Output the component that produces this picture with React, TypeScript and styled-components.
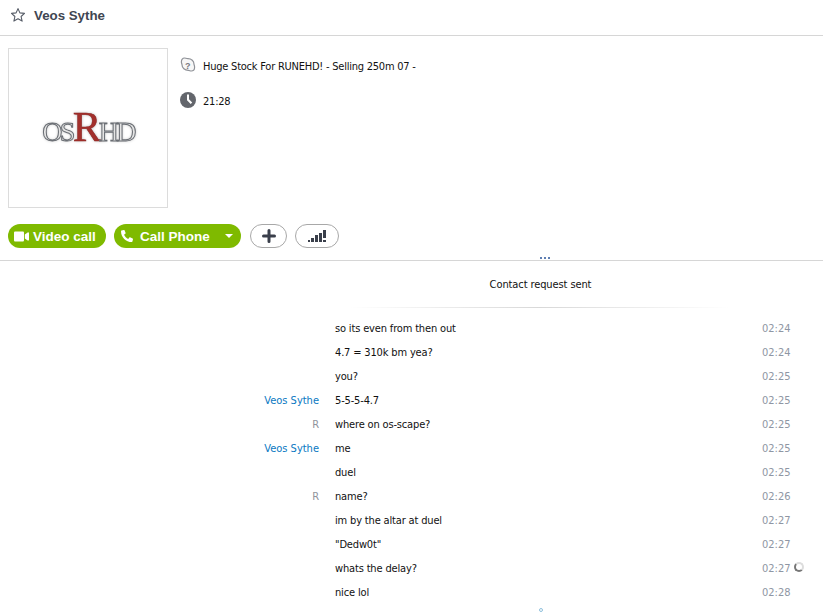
import styled, { createGlobalStyle } from "styled-components";
import { FaPhone, FaVideo } from "react-icons/fa";

const GlobalStyle = createGlobalStyle`
  html, body {
    margin: 0;
    padding: 0;
    background: #fff;
    overflow: hidden;
  }
  body {
    font-family: "DejaVu Sans Condensed", "DejaVu Sans", sans-serif;
    font-size: 11px;
    color: #111;
  }
`;

interface Message {
  sender?: string;
  own?: boolean;
  text: string;
  time: string;
  pending?: boolean;
}

const messages: Message[] = [
  { sender: "", text: "so its even from then out", time: "02:24" },
  { sender: "", text: "4.7 = 310k bm yea?", time: "02:24" },
  { sender: "", text: "you?", time: "02:25" },
  { sender: "Veos Sythe", text: "5-5-5-4.7", time: "02:25" },
  { sender: "R", own: true, text: "where on os-scape?", time: "02:25" },
  { sender: "Veos Sythe", text: "me", time: "02:25" },
  { sender: "", text: "duel", time: "02:25" },
  { sender: "R", own: true, text: "name?", time: "02:26" },
  { sender: "", text: "im by the altar at duel", time: "02:27" },
  { sender: "", text: '"Dedw0t"', time: "02:27" },
  { sender: "", text: "whats the delay?", time: "02:27", pending: true },
  { sender: "", text: "nice lol", time: "02:28" },
];

export default function App() {
  return (
    <Page>
      <GlobalStyle />
      <Header>
        <svg width="16" height="16" viewBox="0 0 16 16">
          <path
            d="M8 1.6l1.9 4.3 4.6.5-3.4 3.1 1 4.6L8 11.8l-4.1 2.3 1-4.6L1.5 6.4l4.6-.5z"
            fill="none"
            stroke="#555b66"
            strokeWidth="1.1"
            strokeLinejoin="round"
          />
        </svg>
        <ContactName>Veos Sythe</ContactName>
      </Header>
      <Profile>
        <Avatar>
          <Logo>
            OS<LogoR>R</LogoR>HD
          </Logo>
        </Avatar>
        <Details>
          <DetailRow>
            <svg width="16" height="16" viewBox="0 0 16 16">
              <path
                d="M4.5 1c1.2 0 1.600.7 3.500.7 3.400 0 6 2.400 6 5.500 0 .7.6 1.300.6 3 0 2.200-1.400 3.800-3.400 3.800-1.100 0-1.600-.6-2.900-.6-3.500 0-6.300-2.500-6.300-5.700 0-.8-.6-1.300-.6-3C1.400 2.500 2.600 1 4.500 1z"
                fill="#f7f7f7"
                stroke="#8f9298"
                strokeWidth="1.200"
              />
              <text x="5" y="11.500" fontSize="9" fontWeight="700" fill="#77797f" fontFamily="Liberation Sans, sans-serif">
                ?
              </text>
            </svg>
            <DetailText>Huge Stock For RUNEHD! - Selling 250m 07 -</DetailText>
          </DetailRow>
          <DetailRow>
            <svg width="16" height="16" viewBox="0 0 16 16">
              <circle cx="8" cy="8" r="8" fill="#63666c" />
              <path d="M7 2.500h2v4.800l3.200 3.200-1.500 1.500L7 8.200z" fill="#fff" />
            </svg>
            <DetailText>21:28</DetailText>
          </DetailRow>
        </Details>
      </Profile>
      <Actions>
        <CallButton>
          <FaVideo size={15} />
          Video call
        </CallButton>
        <CallButton $wide>
          <FaPhone size={12} style={{ transform: "scaleX(-1)" }} />
          Call Phone
          <Caret />
        </CallButton>
        <RoundButton $width={37}>
          <svg width="14" height="14" viewBox="0 0 14 14">
            <path d="M7 1.500v11M1.500 7h11" stroke="#3a3f4b" strokeWidth="3" strokeLinecap="round" />
          </svg>
        </RoundButton>
        <RoundButton $width={44}>
          <svg width="20" height="14" viewBox="0 0 20 14">
            <rect x="1" y="11" width="2" height="2" fill="#3a3f4b" />
            <rect x="4" y="9" width="3" height="4" fill="#3a3f4b" />
            <rect x="8" y="6" width="3" height="7" fill="#3a3f4b" />
            <rect x="12" y="4" width="3" height="9" fill="#3a3f4b" />
            <rect x="16" y="1" width="3" height="8" fill="#3a3f4b" />
            <rect x="16" y="11" width="3" height="2" fill="#3a3f4b" />
          </svg>
        </RoundButton>
      </Actions>
      <Splitter>
        <Dots>
          <Dot />
          <Dot />
          <Dot />
        </Dots>
      </Splitter>
      <SystemNote>Contact request sent</SystemNote>
      <FadeLine />
      <MessageList>
        {messages.map((m, i) => (
          <MessageRow key={i}>
            <Sender $own={m.own}>{m.sender}</Sender>
            <MessageText>{m.text}</MessageText>
            <Time>{m.time}</Time>
            {m.pending && <Spinner />}
          </MessageRow>
        ))}
      </MessageList>
      <TypingDot />
    </Page>
  );
}

const Page = styled.div`
  width: 823px;
  height: 613px;
  overflow: hidden;
  display: flex;
  flex-direction: column;
`;

const Header = styled.div`
  height: 30px;
  padding: 0 0 5px 10px;
  display: flex;
  align-items: center;
  gap: 8px;
  border-bottom: 1px solid #d6d6d6;
`;

const ContactName = styled.span`
  font-family: "Liberation Sans", sans-serif;
  font-size: 13.3px;
  font-weight: 700;
  color: #3f4652;
`;

const Profile = styled.div`
  display: flex;
  padding: 12px 0 0 8px;
  gap: 12px;
`;

const Avatar = styled.div`
  width: 158px;
  height: 158px;
  border: 1px solid #dcdcdc;
  display: flex;
  align-items: center;
  justify-content: center;
`;

const Logo = styled.div`
  font-family: "Liberation Serif", serif;
  font-size: 28px;
  letter-spacing: -2.700px;
  color: #e4e4e4;
  -webkit-text-stroke: 1px #6a6e74;
  text-shadow: 0 0 3px #aaa;
  filter: blur(0.5px);
  line-height: 1;
  margin-top: -4px;
`;

const LogoR = styled.span`
  font-size: 43px;
  color: #a3302c;
  -webkit-text-stroke: 0.500px #8c2522;
`;

const Details = styled.div`
  display: flex;
  flex-direction: column;
  gap: 19px;
  padding-top: 9px;
`;

const DetailRow = styled.div`
  display: flex;
  align-items: center;
  gap: 7px;
  height: 16px;
`;

const DetailText = styled.span`
  color: #111;
  letter-spacing: -0.230px;
  position: relative;
  top: 1px;
`;

const Actions = styled.div`
  display: flex;
  gap: 8px;
  padding: 16px 0 0 8px;
  height: 24px;
`;

const CallButton = styled.div<{ $wide?: boolean }>`
  height: 24px;
  width: ${(p) => (p.$wide ? "127px" : "98px")};
  box-sizing: border-box;
  padding-left: ${(p) => (p.$wide ? "7px" : "6px")};
  border-radius: 12px;
  background: #7fba00;
  color: #fff;
  display: flex;
  align-items: center;
  gap: ${(p) => (p.$wide ? "7px" : "4px")};
  font-family: "Liberation Sans", sans-serif;
  font-size: 13.500px;
  font-weight: 700;
  white-space: nowrap;
  margin-right: ${(p) => (p.$wide ? "1px" : "0")};
`;

const Caret = styled.span`
  width: 0;
  height: 0;
  margin-left: 8px;
  border-left: 4px solid transparent;
  border-right: 4px solid transparent;
  border-top: 4px solid #fff;
`;

const RoundButton = styled.div<{ $width: number }>`
  width: ${(p) => p.$width}px;
  height: 24px;
  box-sizing: border-box;
  border: 1px solid #a8a8a8;
  border-radius: 12px;
  background: #fff;
  display: flex;
  align-items: center;
  justify-content: center;
`;

const Splitter = styled.div`
  margin-top: 12px;
  height: 1px;
  background: #d6d6d6;
  position: relative;
`;

const Dots = styled.div`
  position: absolute;
  left: 540px;
  top: -3px;
  display: flex;
  gap: 2px;
`;

const Dot = styled.span`
  width: 2px;
  height: 2px;
  background: #5f7fb3;
`;

const SystemNote = styled.div`
  margin-top: 16px;
  text-align: center;
  height: 16px;
  line-height: 16px;
  padding-left: 258px;
  color: #111;
  letter-spacing: -0.100px;
`;

const FadeLine = styled.div`
  margin: 14px 0 0 350px;
  width: 380px;
  height: 1px;
  background: linear-gradient(to right, #fff, #d8d8d8 50%, #fff);
`;

const MessageList = styled.div`
  margin-top: 8px;
  display: flex;
  flex-direction: column;
`;

const MessageRow = styled.div`
  height: 24px;
  display: grid;
  grid-template-columns: 319px 427px 30px 12px;
  align-items: center;
  position: relative;
`;

const Sender = styled.span<{ $own?: boolean }>`
  text-align: right;
  color: ${(p) => (p.$own ? "#8f949c" : "#0a78c2")};
`;

const MessageText = styled.span`
  padding-left: 16px;
  color: #111;
  letter-spacing: -0.160px;
`;

const Time = styled.span`
  font-size: 11px;
  color: #8f96a3;
  margin-left: 16px;
  white-space: nowrap;
`;

const Spinner = styled.span`
  position: absolute;
  left: 794px;
  top: 6px;
  width: 10px;
  height: 10px;
  box-sizing: border-box;
  border-radius: 50%;
  border: 2px solid #777;
  border-top-color: #ddd;
  border-right-color: #ddd;
`;

const TypingDot = styled.span`
  position: absolute;
  left: 539px;
  top: 608px;
  width: 4px;
  height: 4px;
  box-sizing: border-box;
  border-radius: 50%;
  border: 1px solid #8fc0dc;
`;
